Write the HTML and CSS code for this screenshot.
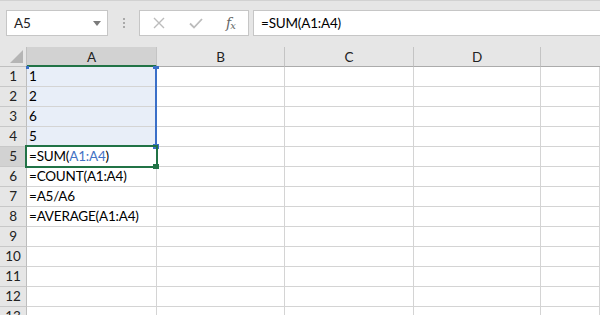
FILE: index.html
```html
<!DOCTYPE html>
<html>
<head>
<meta charset="utf-8">
<link rel="stylesheet" href="styles.css">
</head>
<body>
<div class="app">
  <div class="toolbar">
    <div class="namebox">
      <span>A5</span>
      <svg class="caret" width="8" height="5" viewBox="0 0 8 5"><path d="M0 0H8L4 5Z" fill="#7b7b7b"/></svg>
    </div>
    <div class="grip"><i></i><i></i><i></i></div>
    <div class="btns">
      <svg class="ico" width="12" height="12" viewBox="0 0 12 12"><path d="M1 1L11 11M11 1L1 11" stroke="#bcbcbc" stroke-width="1.4" fill="none"/></svg>
      <svg class="ico" width="14" height="11" viewBox="0 0 14 11"><path d="M1 5.5L5 9.5L13 1" stroke="#bcbcbc" stroke-width="1.8" fill="none"/></svg>
      <span class="fx">f<sub>x</sub></span>
    </div>
    <div class="formula">=SUM(A1:A4)</div>
  </div>
  <div class="sheet">
    <div class="grid">
      <div class="corner"><svg width="13" height="13" viewBox="0 0 13 13"><path d="M13 0V13H0Z" fill="#b5b5b5"/></svg></div>
      <div class="ch sel">A</div>
      <div class="ch">B</div>
      <div class="ch">C</div>
      <div class="ch">D</div>
      <div class="ch last"></div>

      <div class="rh">1</div><div class="c ra">1</div><div class="c"></div><div class="c"></div><div class="c"></div><div class="c"></div>
      <div class="rh">2</div><div class="c ra">2</div><div class="c"></div><div class="c"></div><div class="c"></div><div class="c"></div>
      <div class="rh">3</div><div class="c ra">6</div><div class="c"></div><div class="c"></div><div class="c"></div><div class="c"></div>
      <div class="rh">4</div><div class="c ra">5</div><div class="c"></div><div class="c"></div><div class="c"></div><div class="c"></div>
      <div class="rh act">5</div><div class="c wide">=SUM(<span class="ref">A1:A4</span>)</div><div class="c"></div><div class="c"></div><div class="c"></div><div class="c"></div>
      <div class="rh">6</div><div class="c wide">=COUNT(A1:A4)</div><div class="c"></div><div class="c"></div><div class="c"></div><div class="c"></div>
      <div class="rh">7</div><div class="c wide">=A5/A6</div><div class="c"></div><div class="c"></div><div class="c"></div><div class="c"></div>
      <div class="rh">8</div><div class="c wide">=AVERAGE(A1:A4)</div><div class="c"></div><div class="c"></div><div class="c"></div><div class="c"></div>
      <div class="rh">9</div><div class="c"></div><div class="c"></div><div class="c"></div><div class="c"></div><div class="c"></div>
      <div class="rh">10</div><div class="c"></div><div class="c"></div><div class="c"></div><div class="c"></div><div class="c"></div>
      <div class="rh">11</div><div class="c"></div><div class="c"></div><div class="c"></div><div class="c"></div><div class="c"></div>
      <div class="rh">12</div><div class="c"></div><div class="c"></div><div class="c"></div><div class="c"></div><div class="c"></div>
      <div class="rh">13</div><div class="c"></div><div class="c"></div><div class="c"></div><div class="c"></div><div class="c"></div>
    </div>
    <div class="range-edge"></div>
    <div class="dot dot-tl"></div>
    <div class="dot dot-tr"></div>
    <div class="dot dot-br"></div>
    <div class="active"></div>
    <div class="handle"></div>
  </div>
</div>
</body>
</html>
```

FILE: styles.css
```css
* { box-sizing: border-box; }
html, body { margin: 0; padding: 0; }
body {
  width: 600px;
  height: 315px;
  overflow: hidden;
  background: #ffffff;
  font-family: Lato, "Liberation Sans", sans-serif;
  font-size: 13.5px;
  letter-spacing: -0.2px;
  color: #000;
}
.app { width: 600px; height: 315px; overflow: hidden; }

.toolbar {
  height: 47px;
  background: #e6e6e6;
  border-top: 1px solid #d2d2d2;
  display: flex;
  align-items: center;
  padding-left: 6px;
  padding-bottom: 2px;
}
.namebox {
  width: 102px;
  height: 26px;
  background: #fff;
  border: 1px solid #c6c6c6;
  display: flex;
  align-items: center;
  justify-content: space-between;
  padding: 0 6px 0 7px;
  color: #222;
}
.grip {
  width: 31px;
  display: flex;
  flex-direction: column;
  align-items: center;
  gap: 2px;
}
.grip i { display: block; width: 2px; height: 2px; background: #a9a9a9; }
.btns {
  width: 110px;
  height: 26px;
  background: #fff;
  border: 1px solid #c6c6c6;
  display: flex;
  align-items: center;
  padding-left: 13px;
}
.btns .ico:first-child { margin-right: 24px; }
.btns .ico:nth-child(2) { margin-right: 23px; }
.fx {
  font-family: "DejaVu Serif", "Liberation Serif", serif;
  font-style: italic;
  font-size: 14px;
  color: #666;
  letter-spacing: -1px;
}
.fx sub { font-size: 10px; vertical-align: -1px; }
.formula {
  flex: 1;
  margin-left: 4px;
  height: 26px;
  background: #fff;
  border: 1px solid #c6c6c6;
  border-right: none;
  display: flex;
  align-items: center;
  padding-left: 7px;
}

.sheet { position: relative; }
.grid {
  display: grid;
  grid-template-columns: 27px 130px 128px 129px 127px 59px;
  grid-auto-rows: 20px;
}
.corner {
  background: #e6e6e6;
  border-right: 1px solid #c0c0c0;
  border-bottom: 1px solid #c0c0c0;
  display: flex;
  align-items: flex-end;
  justify-content: flex-end;
  padding: 0 3px 3px 0;
}
.ch {
  background: #e6e6e6;
  border-right: 1px solid #c4c4c4;
  border-bottom: 1px solid #ababab;
  text-align: center;
  line-height: 20px;
  color: #222;
}
.ch.sel { background: #d2d2d2; border-bottom: 2px solid #217346; }
.ch.last { border-right: none; }
.rh {
  background: #e6e6e6;
  border-right: 1px solid #bdbdbd;
  border-bottom: 1px solid #c8c8c8;
  text-align: center;
  line-height: 19px;
  color: #222;
}
.rh.act { background: #d2d2d2; }
.c {
  border-right: 1px solid #d4d4d4;
  border-bottom: 1px solid #d4d4d4;
  line-height: 19px;
  padding-left: 2px;
  white-space: nowrap;
}
.c.ra { background: #e8eef8; }
.c.wide { overflow: visible; }
.ref { color: #4472c4; }

.range-edge {
  position: absolute;
  left: 155px; top: 19px;
  width: 2px; height: 80px;
  background: #3a6fc8;
}
.dot { position: absolute; background: #3a6fc8; }
.dot-tl { left: 26px; top: 19px; width: 3px; height: 3px; }
.dot-tr { left: 153px; top: 19px; width: 6px; height: 3px; }
.dot-br { left: 153px; top: 97px; width: 6px; height: 5px; }
.active {
  position: absolute;
  left: 25px; top: 98px;
  width: 133px; height: 23px;
  border: 2px solid #217346;
}
.handle {
  position: absolute;
  left: 153px; top: 117px;
  width: 6px; height: 5px;
  background: #217346;
}
```
